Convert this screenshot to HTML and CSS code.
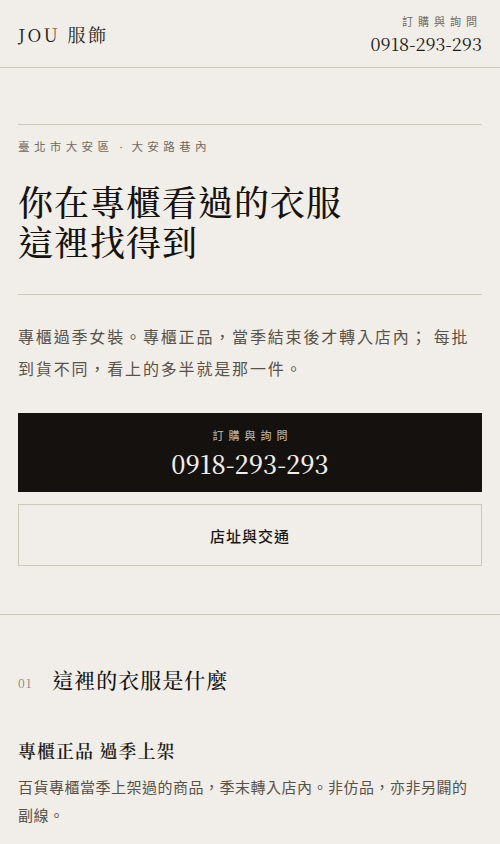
FILE: index.html
```html
<!DOCTYPE html>
<html lang="zh-Hant">
<head>
<meta charset="utf-8">
<meta name="viewport" content="width=device-width, initial-scale=1">
<title>JOU 服飾</title>
<link rel="stylesheet" href="styles.css">
</head>
<body>
<header class="site-header">
  <div class="logo">JOU 服飾</div>
  <div class="header-contact">
    <div class="contact-label">訂購與詢問</div>
    <div class="contact-phone">0918-293-293</div>
  </div>
</header>

<main>
  <section class="hero">
    <div class="hero-inner">
      <p class="location">臺北市大安區<span class="sep"> · </span>大安路巷內</p>
      <h1 class="hero-title">你在專櫃看過的衣服<br>這裡找得到</h1>
      <hr class="rule">
      <p class="hero-text">專櫃過季女裝。專櫃正品，當季結束後才轉入店內； 每批到貨不同，看上的多半就是那一件。</p>
      <a class="btn-call" href="#">
        <span class="btn-label">訂購與詢問</span>
        <span class="btn-phone">0918-293-293</span>
      </a>
      <a class="btn-outline" href="#">店址與交通</a>
    </div>
  </section>

  <section class="about">
    <div class="section-head">
      <span class="section-num">01</span>
      <h2 class="section-title">這裡的衣服是什麼</h2>
    </div>
    <h3 class="item-title">專櫃正品 過季上架</h3>
    <p class="item-text">百貨專櫃當季上架過的商品，季末轉入店內。非仿品，亦非另闢的副線。</p>
  </section>
</main>
</body>
</html>
```

FILE: styles.css
```css
* { box-sizing: border-box; }

html, body {
  margin: 0;
  padding: 0;
  background: #f1eee9;
  color: #1a1612;
}

body {
  font-family: "Noto Sans CJK TC", "Noto Sans", sans-serif;
}

.site-header {
  height: 68px;
  padding: 0 18px;
  display: flex;
  align-items: center;
  justify-content: space-between;
  border-bottom: 1px solid #cdc8b8;
}

.logo {
  font-family: "Noto Serif CJK TC", "Noto Serif TC", "Liberation Serif", serif;
  font-size: 18px;
  letter-spacing: 2.5px;
  color: #1f1b17;
  padding-top: 1px;
}

.header-contact {
  text-align: right;
  padding-top: 2px;
}

.contact-label {
  font-size: 11px;
  line-height: 14px;
  letter-spacing: 5px;
  color: #6f695f;
}

.contact-phone {
  font-family: "Noto Serif CJK TC", "Noto Serif TC", "Liberation Serif", serif;
  font-size: 18px;
  line-height: 24px;
  margin-top: 3px;
  color: #1f1b17;
}

.hero {
  padding: 56px 18px 48px;
  border-bottom: 1px solid #cdc8b8;
}

.hero-inner {
  border-top: 1px solid #cdc8b8;
}

.location {
  margin: 13px 0 0;
  font-size: 11.5px;
  line-height: 16px;
  letter-spacing: 4.4px;
  color: #6f695f;
}

.location .sep {
  font-family: "Noto Sans", sans-serif;
  letter-spacing: 3px;
}

.hero-title {
  margin: 26px 0 0;
  font-family: "Noto Serif CJK TC", "Noto Serif TC", "Liberation Serif", serif;
  font-weight: 500;
  font-size: 35px;
  line-height: 40px;
  letter-spacing: 1px;
  color: #16120f;
}

.rule {
  margin: 33px 0 0;
  border: 0;
  border-top: 1px solid #cdc8b8;
  height: 0;
}

.hero-text {
  margin: 25px 0 0;
  font-size: 16px;
  line-height: 32px;
  letter-spacing: 0.115em;
  color: #58524a;
}

.btn-call {
  margin-top: 29px;
  height: 79px;
  background: #15110e;
  display: flex;
  flex-direction: column;
  align-items: center;
  justify-content: center;
  text-decoration: none;
}

.btn-label {
  font-size: 11px;
  line-height: 14px;
  letter-spacing: 5px;
  padding-left: 5px;
  color: #b3ada3;
  font-weight: 500;
}

.btn-phone {
  margin-top: 6px;
  font-family: "Noto Serif CJK TC", "Noto Serif TC", "Liberation Serif", serif;
  font-size: 25px;
  line-height: 30px;
  font-weight: 500;
  color: #f1eee9;
}

.btn-outline {
  margin-top: 12px;
  height: 62px;
  border: 1px solid #cdc8b8;
  display: flex;
  align-items: center;
  justify-content: center;
  font-size: 15px;
  font-weight: 500;
  letter-spacing: 1px;
  color: #1a1612;
  text-decoration: none;
}

.about {
  padding: 49px 18px 0;
}

.section-head {
  display: flex;
  align-items: baseline;
  gap: 20px;
}

.section-num {
  font-family: "Noto Serif CJK TC", "Noto Serif TC", "Liberation Serif", serif;
  font-size: 12px;
  letter-spacing: 1px;
  color: #8a847a;
}

.section-title {
  margin: 0;
  font-family: "Noto Serif CJK TC", "Noto Serif TC", "Liberation Serif", serif;
  font-weight: 500;
  font-size: 21px;
  line-height: 30px;
  letter-spacing: 1px;
  color: #16120f;
}

.item-title {
  margin: 43px 0 0;
  font-family: "Noto Serif CJK TC", "Noto Serif TC", "Liberation Serif", serif;
  font-weight: 600;
  font-size: 18px;
  line-height: 26px;
  letter-spacing: 1px;
  color: #1f1b17;
}

.item-text {
  margin: 10px 0 0;
  font-size: 15px;
  line-height: 28px;
  letter-spacing: 0.5px;
  color: #58524a;
}
```
